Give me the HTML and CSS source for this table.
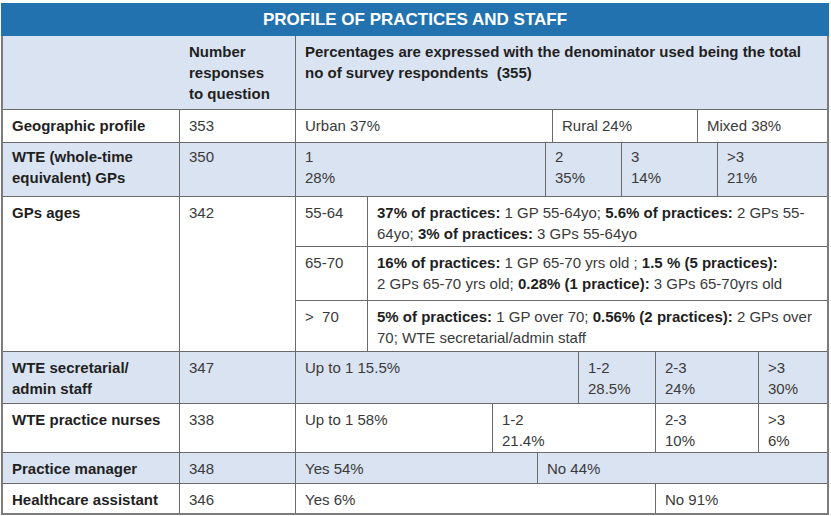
FILE: index.html
```html
<!DOCTYPE html>
<html lang="en">
<head>
<meta charset="utf-8">
<title>Profile of practices and staff</title>
<link rel="stylesheet" href="styles.css">
</head>
<body>
<div class="sheet">
  <div class="title">PROFILE OF PRACTICES AND STAFF</div>
  <div class="table">
    <div class="row head shade">
      <div class="c lab"></div>
      <div class="c num b">Number<br>responses<br>to question</div>
      <div class="c val b">Percentages are expressed with the denominator used being the total no of survey respondents &nbsp;(355)</div>
    </div>
    <div class="row geo">
      <div class="c lab b">Geographic profile</div>
      <div class="c num">353</div>
      <div class="val split">
        <div class="s">Urban 37%</div>
        <div class="s">Rural 24%</div>
        <div class="s">Mixed 38%</div>
      </div>
    </div>
    <div class="row wte shade">
      <div class="c lab b">WTE (whole-time equivalent) GPs</div>
      <div class="c num">350</div>
      <div class="val split">
        <div class="s">1<br>28%</div>
        <div class="s">2<br>35%</div>
        <div class="s">3<br>14%</div>
        <div class="s">&gt;3<br>21%</div>
      </div>
    </div>
    <div class="row ages">
      <div class="c lab b">GPs ages</div>
      <div class="c num">342</div>
      <div class="val stack">
        <div class="arow a1">
          <div class="s">55-64</div>
          <div class="s desc"><b>37% of practices:</b> 1 GP 55-64yo; <b>5.6% of practices:</b> 2 GPs 55-64yo; <b>3% of practices:</b> 3 GPs 55-64yo</div>
        </div>
        <div class="arow a2">
          <div class="s">65-70</div>
          <div class="s desc"><b>16% of practices:</b> 1 GP 65-70 yrs old ; <b>1.5 % (5 practices):</b><br>2 GPs 65-70 yrs old; <b>0.28% (1 practice):</b> 3 GPs 65-70yrs old</div>
        </div>
        <div class="arow a3">
          <div class="s">&gt;&nbsp; 70</div>
          <div class="s desc"><b>5% of practices:</b> 1 GP over 70; <b>0.56% (2 practices):</b> 2 GPs over 70; WTE secretarial/admin staff</div>
        </div>
      </div>
    </div>
    <div class="row sec shade">
      <div class="c lab b">WTE secretarial/<br>admin staff</div>
      <div class="c num">347</div>
      <div class="val split">
        <div class="s">Up to 1 15.5%</div>
        <div class="s">1-2<br>28.5%</div>
        <div class="s">2-3<br>24%</div>
        <div class="s">&gt;3<br>30%</div>
      </div>
    </div>
    <div class="row nurse">
      <div class="c lab b">WTE practice nurses</div>
      <div class="c num">338</div>
      <div class="val split">
        <div class="s">Up to 1 58%</div>
        <div class="s">1-2<br>21.4%</div>
        <div class="s">2-3<br>10%</div>
        <div class="s">&gt;3<br>6%</div>
      </div>
    </div>
    <div class="row mgr shade">
      <div class="c lab b">Practice manager</div>
      <div class="c num">348</div>
      <div class="val split">
        <div class="s">Yes 54%</div>
        <div class="s">No 44%</div>
      </div>
    </div>
    <div class="row hca">
      <div class="c lab b">Healthcare assistant</div>
      <div class="c num">346</div>
      <div class="val split">
        <div class="s">Yes 6%</div>
        <div class="s">No 91%</div>
      </div>
    </div>
  </div>
</div>
</body>
</html>
```

FILE: styles.css
```css
* { box-sizing: border-box; }

body {
  margin: 0;
  background: #ffffff;
  font-family: "Liberation Sans", Arial, sans-serif;
  font-size: 15px;
  line-height: 21px;
  color: #3a3a3a;
}

.sheet {
  width: 828px;
  margin: 3px 0 0 1px;
}

.title {
  height: 33px;
  padding-top: 2px;
  background: #2372b0;
  color: #ffffff;
  font-weight: bold;
  font-size: 17px;
  line-height: 30px;
  text-align: center;
}

.table {
  border: 2px solid #7c7c7c;
  border-top: 0;
}

.row {
  display: grid;
  grid-template-columns: 177px 116px 1fr;
  border-bottom: 1px solid #6a6a6a;
}

.row:last-child { border-bottom: 0; }

.shade { background: #dae3f1; }

.b, b { font-weight: bold; color: #1f1f1f; }

.c {
  padding: 5px 8px 0 9px;
  border-right: 1px solid #6a6a6a;
}

.c.val { border-right: 0; }

.head .lab { border-right-color: transparent; }

.s {
  padding: 5px 8px 0 9px;
  border-right: 1px solid #6a6a6a;
}

.wte .c, .wte .s { padding-top: 3px; }

.split { display: grid; }
.split .s:last-child { border-right: 0; }

.head { height: 74px; }
.geo { height: 33px; }
.wte { height: 54px; }
.ages { height: 155px; }
.sec { height: 52px; }
.nurse { height: 49px; }
.mgr { height: 31px; }
.hca { height: 29px; }

.geo .split { grid-template-columns: 257px 145px 1fr; }
.wte .split { grid-template-columns: 250px 76px 96px 1fr; }
.sec .split { grid-template-columns: 283px 77px 103px 1fr; }
.nurse .split { grid-template-columns: 197px 163px 103px 1fr; }
.mgr .split { grid-template-columns: 242px 1fr; }
.hca .split { grid-template-columns: 360px 1fr; }

.stack {
  display: flex;
  flex-direction: column;
}

.arow {
  display: grid;
  grid-template-columns: 72px 1fr;
  border-bottom: 1px solid #6a6a6a;
}

.arow:last-child { border-bottom: 0; flex: 1; }
.arow .s:last-child { border-right: 0; }
.a1 { height: 50px; }
.a2 { height: 54px; }

.desc { padding-right: 4px; }
```
